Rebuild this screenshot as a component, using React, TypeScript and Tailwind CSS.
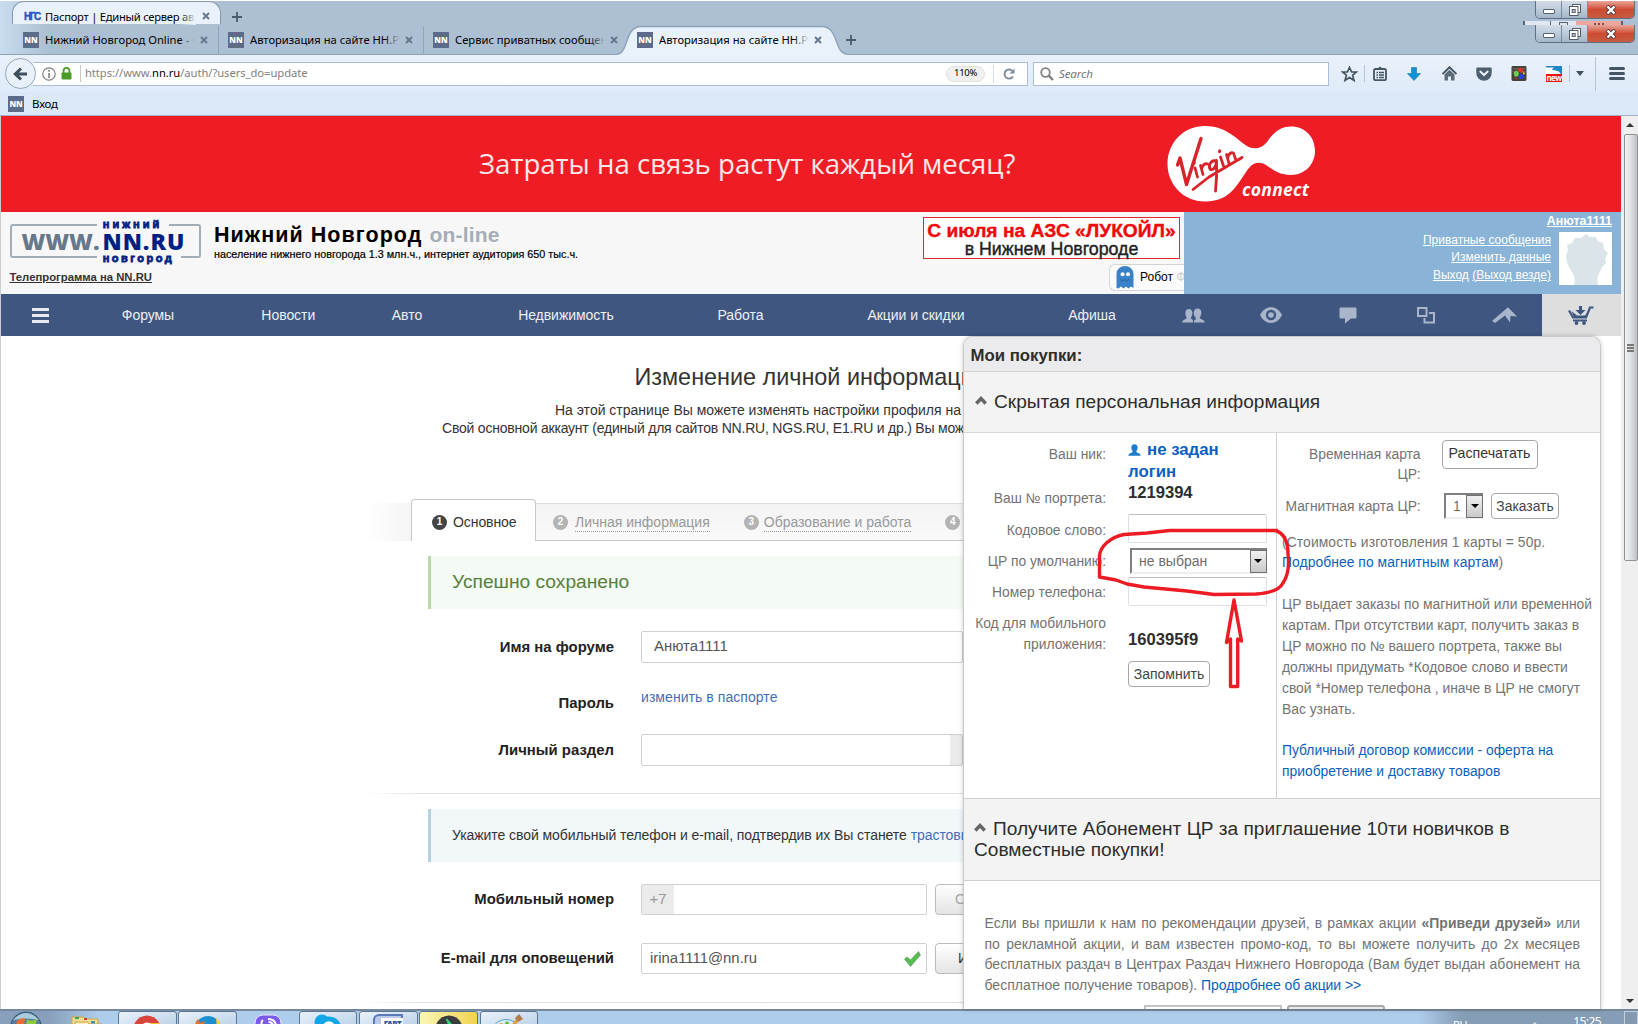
import type { ReactNode } from "react";

function NNIcon() {
  return (
    <span className="flex h-4 w-4 shrink-0 items-center justify-center overflow-hidden bg-[#5b6b89] font-['Open_Sans',sans-serif] text-[8px] leading-none font-extrabold text-white">
      NN
    </span>
  );
}

function Cross() {
  return (
    <svg className="h-2 w-2 shrink-0" viewBox="0 0 8 8">
      <path d="M1 1L7 7M7 1L1 7" stroke="#66788d" strokeWidth="2" />
    </svg>
  );
}

function Plus() {
  return (
    <svg className="h-2.5 w-2.5 shrink-0" viewBox="0 0 10 10">
      <path d="M5 0V10M0 5H10" stroke="#4b5b6c" strokeWidth="1.8" />
    </svg>
  );
}

function Tab({ title, fade }: { title: string; fade: string }) {
  return (
    <>
      <NNIcon />
      <span className="relative ml-[6px] w-[150px] overflow-hidden whitespace-nowrap">
        {title}
        <span className={"absolute inset-y-0 right-0 w-4 bg-linear-to-r from-transparent " + fade} />
      </span>
    </>
  );
}

function WindowButtons() {
  return (
    <div className="flex h-[18px] w-[100px] overflow-hidden rounded-b-[5px] border border-t-0 border-[#5f6e80]">
      <div className="flex w-[26px] items-center justify-center border-r border-[#7a899b] bg-linear-to-b from-[#d3dce6] via-[#bccbdb] to-[#a3b5c8] pt-1">
        <span className="h-[5px] w-[12px] rounded-[1px] border border-[#59646f] bg-white" />
      </div>
      <div className="flex w-[26px] items-center justify-center border-r border-[#7a899b] bg-linear-to-b from-[#d3dce6] via-[#bccbdb] to-[#a3b5c8]">
        <svg className="h-[12px] w-[12px]" viewBox="0 0 12 12">
          <rect x="3.5" y="0.5" width="8" height="8" fill="#fff" stroke="#545f6b" />
          <rect x="0.5" y="2.5" width="8.5" height="9" fill="#fff" stroke="#545f6b" />
          <rect x="3.2" y="5.5" width="3" height="3" fill="#b5c4d3" stroke="#545f6b" />
        </svg>
      </div>
      <div className="flex flex-1 items-center justify-center bg-linear-to-b from-[#e6a598] via-[#cf4a33] to-[#c55b43]">
        <svg className="h-[10px] w-[12px]" viewBox="0 0 12 10">
          <path d="M2 1L10 9M10 1L2 9" stroke="#5b3a3c" strokeWidth="4.2" />
          <path d="M2.5 1.5L9.5 8.5M9.5 1.5L2.5 8.5" stroke="#fff" strokeWidth="2.4" />
        </svg>
      </div>
    </div>
  );
}

function TitleBars() {
  return (
    <div className="flex justify-between border-t border-white bg-linear-to-r from-[#c9dcf0] via-[#adbfd2] via-3% to-[#adbfd2] text-[11.2px] text-black">
      <div className="flex flex-col">
        <div className="flex h-[24px]">
          <div className="relative ml-[12px] flex h-[23px] w-[209px] items-center rounded-t-[12px] border border-b-0 border-[#8498ae] bg-[#e9f1fb] pt-[7px] pl-[11px]">
            <span className="w-[21px] font-['Liberation_Sans',sans-serif] text-[10px] leading-none font-bold tracking-[-1.4px] text-[#2b55c4] [-webkit-text-stroke:0.4px_#2b55c4]">НГС</span>
            <span className="relative h-[17px] w-[151px] overflow-hidden leading-[17px] tracking-[-0.25px] whitespace-nowrap">
              Паспорт | Единый сервер ав
              <span className="absolute inset-y-0 right-0 w-4 bg-linear-to-r from-transparent to-[#e9f1fb]" />
            </span>
            <span className="ml-[6px] flex pb-[2px]"><Cross /></span>
          </div>
          <div className="mt-[11px] ml-[11px]"><Plus /></div>
        </div>
        <div className="flex h-[29px] pt-px">
          <div className="flex w-[219px] items-center border-r border-[#92a5ba] pl-[23px]">
            <Tab title="Нижний Новгород Online - Ф" fade="to-[#adbfd2]" />
            <span className="ml-[5px] flex"><Cross /></span>
          </div>
          <div className="flex w-[205px] items-center border-r border-[#92a5ba] pl-[9px]">
            <Tab title="Авторизация на сайте НН.РУ" fade="to-[#adbfd2]" />
            <span className="ml-[5px] flex"><Cross /></span>
          </div>
          <div className="flex w-[201px] items-center pl-[9px]">
            <Tab title="Сервис приватных сообщений" fade="to-[#adbfd2]" />
            <span className="ml-[5px] flex"><Cross /></span>
          </div>
          <div className="relative flex w-[217px] items-center pl-[12px]">
            <svg className="absolute -top-px -left-[8px] h-[30px] w-[234px]" viewBox="0 0 234 30">
              <path d="M0 29.5C12 29.5 7 1.500 24 1.500H205C222 1.500 217 29.500 230 29.500V30H0Z" fill="#e9f1fb" />
              <path d="M0 29C12 29 7 1.500 24 1.500H205C222 1.500 217 29 230 29" fill="none" stroke="#8da1b7" strokeWidth="1.4" />
            </svg>
            <div className="relative flex items-center">
              <Tab title="Авторизация на сайте НН.РУ" fade="to-[#e9f1fb]" />
              <span className="ml-[5px] flex"><Cross /></span>
            </div>
          </div>
          <div className="flex items-center pl-[4px]"><Plus /></div>
        </div>
      </div>
      <div className="flex flex-col items-end pr-[3px]">
        <WindowButtons />
        <div className="mt-[2px] mr-[12px] flex h-[4px] w-[100px] border-l-2 border-[#59646f]">
          <div className="w-[25px] bg-[#dfe8f2]" />
          <div className="flex w-[26px] justify-center border-l border-[#59646f] bg-[#dfe8f2]"><span className="mt-[1px] h-[3px] w-[9px] border border-b-0 border-[#59646f]" /></div>
          <div className="flex flex-1 justify-center border-r-2 border-[#59646f] bg-[#eda79d]"><span className="mt-[2px] w-[10px] border-t-2 border-dotted border-[#7c4f50]" /></div>
        </div>
        <WindowButtons />
      </div>
    </div>
  );
}

function ToolbarIcon({ w, children }: { w: string; children: ReactNode }) {
  return <div className={"flex shrink-0 items-center justify-center " + w}>{children}</div>;
}

function Toolbar() {
  return (
    <div className="flex h-[38px] items-center border-t border-[#8da1b7] bg-linear-to-b from-[#e9f1fb] to-[#dfebf8]">
      <div className="z-10 ml-[5px] flex h-[31px] w-[31px] shrink-0 items-center justify-center rounded-full border-[1.5px] border-[#93a8c0] bg-[#e9f1fa]">
        <svg className="h-[14px] w-[15px]" viewBox="0 0 15 14">
          <path d="M14 7H3M8 1.5L2.3 7L8 12.5" fill="none" stroke="#3f4f5e" strokeWidth="3" />
        </svg>
      </div>
      <div className="-ml-[3px] flex h-[24px] w-[995px] items-center border border-l-0 border-[#aabdd3] bg-white text-[11.2px]">
        <svg className="ml-[9px] h-[14px] w-[14px] shrink-0" viewBox="0 0 14 14">
          <circle cx="7" cy="7" r="6.2" fill="none" stroke="#808080" strokeWidth="1.2" />
          <path d="M7 3V4.7M7 6V11" stroke="#808080" strokeWidth="1.6" />
        </svg>
        <svg className="ml-[4.500px] h-[13px] w-[11px] shrink-0" viewBox="0 0 11 13">
          <path d="M2.6 6V3.8a2.9 2.9 0 0 1 5.8 0V6" fill="none" stroke="#4a9c28" strokeWidth="1.8" />
          <rect x="0.5" y="5.5" width="10" height="7" rx="0.8" fill="#4a9c28" />
        </svg>
        <span className="ml-[8px] h-[17px] w-px bg-[#c9c9c9]" />
        <span className="ml-[4.500px] tracking-[-0.04px] text-[#808080]">
          https://www.<span className="text-black">nn.ru</span>/auth/?users_do=update
        </span>
        <span className="ml-auto flex h-[16px] w-[39px] items-center justify-center rounded-full border border-[#e0e0e0] bg-[#f0f0f0] text-[9.500px] tracking-[-0.3px] text-black">110%</span>
        <span className="ml-[8px] h-[18px] w-px bg-[#d5dde6]" />
        <svg className="mr-[12px] ml-[9px] h-[12px] w-[12px]" viewBox="0 0 12 12">
          <path d="M10 8.5A4.6 4.6 0 1 1 9.4 2.8" fill="none" stroke="#7d8b9b" strokeWidth="1.9" />
          <path d="M11.5 0.5V5.5H6.5Z" fill="#7d8b9b" />
        </svg>
      </div>
      <div className="ml-[5px] flex h-[24px] w-[296px] items-center border border-[#aabdd3] bg-white text-[11.500px]">
        <svg className="ml-[6px] h-[14px] w-[14px]" viewBox="0 0 14 14">
          <circle cx="5.5" cy="5.5" r="4.3" fill="none" stroke="#808080" strokeWidth="1.8" />
          <path d="M8.7 8.7L13 13" stroke="#808080" strokeWidth="2.4" />
        </svg>
        <span className="ml-[5px] tracking-[-0.1px] text-[#757575] italic">Search</span>
      </div>
      <ToolbarIcon w="ml-[2px] w-[34px]">
        <svg className="ml-0.5 h-[16px] w-[17px]" viewBox="0 0 17 16">
          <path d="M8.5 1.5L10.6 6H15.3L11.6 9.2L13 14.4L8.5 11.5L4 14.4L5.4 9.2L1.7 6H6.4Z" fill="none" stroke="#445463" strokeWidth="1.7" />
        </svg>
      </ToolbarIcon>
      <span className="-ml-px h-[17px] w-px bg-[#b4c4d6]" />
      <ToolbarIcon w="w-[29px]">
        <svg className="h-[15px] w-[14px]" viewBox="0 0 14 15">
          <rect x="1" y="3" width="12" height="11.2" rx="1.5" fill="none" stroke="#445463" strokeWidth="1.8" />
          <path d="M4.5 2.5L7 0.5L9.5 2.5V4H4.5Z" fill="#445463" />
          <path d="M3.5 6.5H5M6 6.5H11M3.5 9H5M6 9H11M3.5 11.5H5M6 11.5H11" stroke="#445463" strokeWidth="1.3" />
        </svg>
      </ToolbarIcon>
      <ToolbarIcon w="ml-[5px] w-[30px]">
        <svg className="h-[14px] w-[14px]" viewBox="0 0 14 14">
          <path d="M4.5 0.5H9.5V6.5H13.6L7 13.5L0.4 6.5H4.5Z" fill="#1292d6" stroke="#0e78b4" strokeWidth="0.6" />
        </svg>
      </ToolbarIcon>
      <ToolbarIcon w="ml-[5px] w-[30px]">
        <svg className="h-[15px] w-[15px]" viewBox="0 0 15 15">
          <path d="M0.5 8L7.5 1.2L14.5 8" fill="none" stroke="#445463" strokeWidth="1.9" />
          <path d="M2.5 8.6L7.5 3.8L12.5 8.6V14.5H9V10.5H6V14.5H2.5Z" fill="#5d6b79" />
        </svg>
      </ToolbarIcon>
      <ToolbarIcon w="ml-[5px] w-[30px]">
        <svg className="h-[14px] w-[16px]" viewBox="0 0 16 14">
          <path d="M1.5 0.5H14.5Q15.7 0.5 15.7 1.8V6A7.7 7.7 0 0 1 0.3 6V1.8Q0.3 0.5 1.5 0.5Z" fill="#4f5e6c" />
          <path d="M4.3 4.6L8 8.1L11.7 4.6" fill="none" stroke="#e8f0fa" strokeWidth="2" strokeLinecap="round" />
        </svg>
      </ToolbarIcon>
      <ToolbarIcon w="ml-[5px] w-[30px]">
        <svg className="h-[15px] w-[16px]" viewBox="0 0 16 16">
          <rect width="16" height="16" rx="1.5" fill="#45413b" />
          <path d="M1 3H15M1 6H15" stroke="#777168" />
          <path d="M9.500 1.500L13 4L11.500 7.500L8 6.500L6.500 3.500Z" fill="#e33229" />
          <path d="M5 4.500L8 7.500L7 11L3.500 11.500L2 7.500Z" fill="#6ad04c" />
          <path d="M9.500 8L13.500 10L12.500 13.500L8.500 14L7.500 11Z" fill="#2a3fe0" />
          <path d="M12 6.500L14.500 7.500L13 9.500Z" fill="#ece04a" />
          <path d="M4 12L6.500 13.500L4.500 14.500Z" fill="#c33" />
        </svg>
      </ToolbarIcon>
      <ToolbarIcon w="ml-[5px] w-[30px]">
        <div className="relative h-[16px] w-[16px] overflow-hidden bg-[#1e87c1]">
          <svg className="absolute inset-0 h-[9px] w-[16px]" viewBox="0 0 16 9">
            <path d="M0 1.500H8L5.500 3.500L13 5.500L15.500 9H0Z" fill="#fff" />
          </svg>
          <span className="absolute inset-x-0 bottom-0 h-[8px] bg-[#f50d0d] text-center text-[8px] leading-[7px] font-bold tracking-[-0.5px] text-white">new</span>
        </div>
      </ToolbarIcon>
      <span className="h-[17px] w-px bg-[#b4c4d6]" />
      <span className="ml-[6px] border-x-4 border-t-5 border-x-transparent border-t-[#3f4f5e]" />
      <span className="ml-[11px] h-[34px] w-px bg-[#b4c4d6]" />
      <span className="ml-[13px] flex w-[16px] flex-col gap-[2px]">
        <span className="h-[3px] rounded-full bg-[#445463]" />
        <span className="h-[3px] rounded-full bg-[#445463]" />
        <span className="h-[3px] rounded-full bg-[#445463]" />
      </span>
    </div>
  );
}

function BannerAd() {
  return (
    <div className="relative flex h-[95.500px] items-center bg-[#ee1c24]">
      <span className="ml-[478px] w-[540px] font-['Open_Sans',sans-serif] text-[27.600px] leading-none whitespace-nowrap text-white/90">
        Затраты на связь растут каждый месяц?
      </span>
      <div className="relative ml-[148px] h-[76px] w-[149px]">
        <svg className="h-[76px] w-[149px]" viewBox="0 0 149 76">
          <path d="M38 0C57 0 68 11 77 18C84 24 94 24 100 16C106 7 113 0.500 124 0.500C138 0.500 148 11 148 25C148 38 138 49 124 49C112 49 105 43 99 39C93 35.500 87 36 82 42C72 54 66 75.500 38 75.500C16 75.500 0.500 58 0.500 38C0.500 17 16 0 38 0Z" fill="#fff" />
          <g fill="none" stroke="#d9232b" strokeLinecap="round" strokeLinejoin="round">
            <path d="M10.500 39L13 32L19.500 58.500L34 12.500" strokeWidth="3.400" />
            <path d="M28 42L30.500 51M33.500 39.500L36 48.500M34.500 43C35.500 39 38 37 40.500 38M49 35C44 33.500 40.500 40 43.500 43.500C47 45 49.500 39 49.500 34.500C50 44 49.500 56 48.500 65M26 63.500L42 51L75 31.500M53.500 31L56.500 40M59.500 28.500L62 37.500M60.500 32C62 26.500 66 25 67 28.500L69 34.500Q73 33.500 75 31.500" strokeWidth="2.800" />
            <path d="M27 37L27.200 36.500M52.500 25.500L52.700 25" strokeWidth="3.200" />
          </g>
        </svg>
        <span className="absolute top-[53.500px] left-[75px] font-['Open_Sans',sans-serif] text-[17.500px] leading-[20px] font-bold tracking-[0.300px] text-white italic">connect</span>
      </div>
    </div>
  );
}

function Header() {
  return (
    <div className="flex h-[82.500px] bg-[#f7f7f7] font-['Liberation_Sans',sans-serif]">
      <div className="ml-[8.500px] flex w-[204.500px] flex-col">
        <div className="mt-[8px] flex h-[43px] w-[191px] flex-col">
          <div className="flex h-[9px] items-end">
            <span className="h-[5px] w-[87px] rounded-tl-[3px] border-t-2 border-l-2 border-[#a3adb5]" />
            <span className="w-[72px] text-center text-[11px] leading-[9px] font-black tracking-[3px] text-[#001f85] [-webkit-text-stroke:0.8px_#001f85]">нижний</span>
            <span className="h-[5px] flex-1 rounded-tr-[3px] border-t-2 border-r-2 border-[#a3adb5]" />
          </div>
          <div className="flex h-[25px] items-center border-x-2 border-[#a3adb5] pl-[10px] font-['Open_Sans',sans-serif] text-[23px] leading-[24px] font-extrabold text-[#67788a]">
            <span className="tracking-[-0.1px]">WWW.</span>
            <span className="ml-[3px] tracking-[1px] text-[#001f85]">NN.RU</span>
          </div>
          <div className="flex h-[9px] items-start">
            <span className="h-[4px] w-[87px] rounded-bl-[3px] border-b-2 border-l-2 border-[#a3adb5]" />
            <span className="w-[84px] text-center text-[11px] leading-[8px] font-black tracking-[2.500px] text-[#001f85] [-webkit-text-stroke:0.8px_#001f85]">новгород</span>
            <span className="h-[4px] flex-1 rounded-br-[3px] border-r-2 border-b-2 border-[#a3adb5]" />
          </div>
        </div>
        <span className="mt-[6px] text-[11.300px] leading-[17px] font-bold whitespace-nowrap text-[#333] underline">Телепрограмма на NN.RU</span>
      </div>
      <div className="flex w-[710px] flex-col pt-[11px] font-bold">
        <span className="text-[21.500px] leading-[23px] tracking-[1.050px] whitespace-nowrap text-black">
          Нижний Новгород <span className="text-[21px] tracking-[0.2px] text-[#a4adb8]">on-line</span>
        </span>
        <span className="text-[10.800px] leading-[14px] font-normal text-black [-webkit-text-stroke:0.2px_black]">
          население нижнего новгорода 1.3 млн.ч., интернет аудитория 650 тыс.ч.
        </span>
      </div>
      <div className="flex w-[260px] flex-col items-end">
        <div className="mt-[5px] mr-[4px] flex h-[42px] w-[257px] flex-col items-center border-[1.5px] border-[#e8272d] bg-white whitespace-nowrap">
          <span className="mt-[3px] text-[19.200px] leading-[20px] font-bold text-[#ee0a0a] [-webkit-text-stroke:0.4px_#ee0a0a]">С июля на АЗС «ЛУКОЙЛ»</span>
          <span className="-mt-px text-[17.800px] leading-[18px] text-[#222] [-webkit-text-stroke:0.4px_#222]">в Нижнем Новгороде</span>
        </div>
        <div className="mt-[5px] flex h-[27px] w-[75px] items-center overflow-hidden rounded-l-[6px] border border-r-0 border-[#d4d4d4] bg-[#fbfbfb] pl-[6px]">
          <svg className="h-[23px] w-[18px] shrink-0" viewBox="0 0 18 23">
            <path d="M0.500 22V8A8.500 8 0 0 1 17.500 8V22L15 20.500L12.500 22.500L10 20.500L7.500 22.500L5 20.500L2.500 22.500Z" fill="#3a82c8" />
            <circle cx="6.500" cy="8.300" r="2" fill="#fff" />
            <circle cx="12" cy="8.300" r="2" fill="#fff" />
            <path d="M4.500 13.500L6.500 15L8.500 13.500L10.500 15L12.500 13.500L14 14.500" fill="none" stroke="#245d99" />
          </svg>
          <span className="ml-[6px] text-[12px] whitespace-nowrap text-black">Робот <span className="text-[#ccc]">Ф</span></span>
        </div>
      </div>
      <div className="flex flex-1 flex-col items-end bg-[#8ab4d7] pr-[8.500px] text-[12.400px] whitespace-nowrap text-white">
        <span className="mt-[1.500px] leading-[17px] font-bold underline">Анюта1111</span>
        <div className="mt-[2px] flex gap-[8px]">
          <div className="flex flex-col items-end text-[12px] leading-[17.3px]">
            <span className="underline">Приватные сообщения</span>
            <span className="underline">Изменить данные</span>
            <span><span className="underline">Выход</span> <span className="underline">(Выход везде)</span></span>
          </div>
          <div className="h-[53px] w-[53px] bg-white">
            <svg className="h-[53px] w-[53px]" viewBox="0 0 53 53">
              <path d="M15 53C17 45 14 42 11 37L8 30L7 24L9 18L8 13L13 11L16 6L22 6L27 2L31 5L37 5L39 9L44 11L45 17L49 21L46 27L47 31L43 35L41 40C38 44 38 48 39 53Z" fill="#dbe5e9" />
            </svg>
          </div>
        </div>
      </div>
    </div>
  );
}

function NavItem({ w, children }: { w: string; children: ReactNode }) {
  return <div className={"flex shrink-0 items-center justify-center whitespace-nowrap " + w}>{children}</div>;
}

function Nav() {
  return (
    <div className="flex h-[42px] bg-[#3f5680] font-['Liberation_Sans',sans-serif] text-[14px] tracking-[-0.05px] text-[#eceff4]">
      <NavItem w="w-[78px]">
        <span className="flex w-[17px] flex-col gap-[3px]">
          <span className="h-[3px] bg-[#e6eaf0]" />
          <span className="h-[3px] bg-[#e6eaf0]" />
          <span className="h-[3px] bg-[#e6eaf0]" />
        </span>
      </NavItem>
      <NavItem w="w-[138px]">Форумы</NavItem>
      <NavItem w="w-[142.6px]">Новости</NavItem>
      <NavItem w="w-[94.800px]">Авто</NavItem>
      <NavItem w="w-[223.200px]">Недвижимость</NavItem>
      <NavItem w="w-[125.800px]">Работа</NavItem>
      <NavItem w="w-[225.200px]">Акции и скидки</NavItem>
      <NavItem w="w-[126.800px]">Афиша</NavItem>
      <NavItem w="w-[75.600px]">
        <svg className="h-[15px] w-[23px]" viewBox="0 0 23 15" fill="#a9b5cb">
          <path d="M12 14.500V12.500C14 12 14 11 13.500 9.500C10.500 6 11.500 0.800 15.500 0.500C20 0.500 20.500 6 17.800 9.500C17.500 11.500 22.500 11 22.800 14.500Z" />
          <path d="M0.200 14.500C0.500 11 5 11.500 4.700 9.500C2.500 6 3 1 7 1C11 1 11.200 6.500 9 9.500C8.700 11.500 11 11 11 12.500V14.500Z" />
        </svg>
      </NavItem>
      <NavItem w="w-[80px]">
        <svg className="h-[16px] w-[22px]" viewBox="0 0 22 16">
          <path d="M0 8C5 -2.500 17 -2.500 22 8C17 18.500 5 18.500 0 8Z" fill="#a9b5cb" />
          <circle cx="11" cy="8" r="5.200" fill="#3f5680" />
          <circle cx="11" cy="8" r="2.800" fill="#a9b5cb" />
        </svg>
      </NavItem>
      <NavItem w="w-[74px]">
        <svg className="h-[17px] w-[18px]" viewBox="0 0 18 17">
          <path d="M1.500 0.500H16.500Q17.500 0.500 17.500 1.500V10.500Q17.500 11.500 16.500 11.500H12L6 16.500V11.500H1.500Q0.500 11.500 0.500 10.500V1.500Q0.500 0.500 1.500 0.500Z" fill="#a9b5cb" />
        </svg>
      </NavItem>
      <NavItem w="w-[82px]">
        <svg className="h-[17px] w-[18px]" viewBox="0 0 18 17">
          <rect x="1" y="1" width="8.500" height="8" fill="none" stroke="#a9b5cb" strokeWidth="2" />
          <path d="M12 6H17V15.500H7.500V11" fill="none" stroke="#a9b5cb" strokeWidth="2" />
        </svg>
      </NavItem>
      <NavItem w="w-[75px]">
        <svg className="h-[17px] w-[25px]" viewBox="0 0 25 17">
          <path d="M0 14L16 0.300L25 9.500L18.500 9L18 15.500L13 8.500L3 16Z" fill="#a9b5cb" />
        </svg>
      </NavItem>
      <div className="flex flex-1 items-center justify-center bg-[#dedede]">
        <svg className="h-[19px] w-[26px]" viewBox="0 0 26 19">
          <path d="M1 4.500L5 11.500H18L22 1.500H25.500" fill="none" stroke="#3f5680" strokeWidth="2.200" />
          <path d="M3.500 5L9 9.500L17 9.500L20.500 5L18 11.500H6ZM5 13.500H19V15.500H5Z" fill="#3f5680" />
          <path d="M11 0H14V4H17.500L12.500 9L7.500 4H11Z" fill="#3f5680" />
          <circle cx="8.500" cy="17" r="1.900" fill="#3f5680" />
          <circle cx="16" cy="17" r="1.900" fill="#3f5680" />
        </svg>
      </div>
    </div>
  );
}

function Badge({ n, color }: { n: string; color: string }) {
  return (
    <span className={"flex h-[15px] w-[15px] shrink-0 items-center justify-center rounded-full text-[10px] leading-none font-bold text-white " + color}>{n}</span>
  );
}

function Label({ children }: { children: ReactNode }) {
  return <span className="w-[250px] shrink-0 text-right text-[14.900px] font-bold whitespace-nowrap text-[#222]">{children}</span>;
}

function ProfileForm() {
  return (
    <div className="flex w-[962px] flex-col overflow-hidden pl-[363px] text-[14px] whitespace-nowrap text-[#333]">
      <h1 className="mt-[27px] pl-[270.500px] text-[23.400px] leading-[28px]">Изменение личной информации</h1>
      <p className="mt-[10px] pl-[191px] leading-[18px]">На этой странице Вы можете изменять настройки профиля на</p>
      <p className="pl-[78px] leading-[18px] tracking-[-0.21px]">Свой основной аккаунт (единый для сайтов NN.RU, NGS.RU, E1.RU и др.) Вы может</p>
      <div className="mt-[62px] flex h-[42px] items-end">
        <div className="h-[38px] w-[47px] shrink-0 bg-linear-to-r from-white to-[#f5f5f5]" />
        <div className="relative flex h-[42px] w-[125px] shrink-0 items-center rounded-t-[4px] border border-b-0 border-[#c8c8c8] bg-white pt-[3px] pl-[20px]">
          <Badge n="1" color="bg-[#444]" />
          <span className="ml-[6px] tracking-[-0.08px] text-[#333]">Основное</span>
        </div>
        <div className="flex h-[38px] w-[600px] shrink-0 items-center border-y border-t-[#dedede] border-b-[#c8c8c8] bg-linear-to-b from-[#f3f3f3] to-[#fafafa] text-[#999]">
          <span className="ml-[17px] flex"><Badge n="2" color="bg-[#b3b3b3]" /></span>
          <span className="mt-[2px] ml-[7px] border-b border-dotted border-[#999] leading-[17px]">Личная информация</span>
          <span className="ml-[34px] flex"><Badge n="3" color="bg-[#b3b3b3]" /></span>
          <span className="mt-[2px] ml-[5px] border-b border-dotted border-[#999] leading-[17px]">Образование и работа</span>
          <span className="ml-[34px] flex"><Badge n="4" color="bg-[#b3b3b3]" /></span>
        </div>
      </div>
      <div className="mt-[15px] ml-[64px] flex h-[53px] w-[620px] items-center border-l-3 border-[#bcd9ae] bg-[#f4faf4] pb-[1px] pl-[21px] text-[19.200px] text-[#567f3c]">Успешно сохранено</div>
      <div className="mt-[22px] flex h-[32px] items-center">
        <Label>Имя на форуме</Label>
        <div className="ml-[27px] flex h-[32px] w-[400px] items-center rounded-[2px] border border-[#d0d0d0] pb-px pl-[12px] text-[14.900px] text-[#555]">Анюта1111</div>
      </div>
      <div className="mt-[30px] flex h-[20px] items-center">
        <Label>Пароль</Label>
        <span className="-mt-[11px] ml-[27px] tracking-[0.060px] text-[#3f6fb8]">изменить в паспорте</span>
      </div>
      <div className="mt-[21px] flex h-[32px] items-center">
        <Label>Личный раздел</Label>
        <div className="ml-[27px] flex h-[32px] w-[400px] rounded-[2px] border border-[#d0d0d0]">
          <div className="ml-[308px] flex-1 bg-[#ebebeb]" />
        </div>
      </div>
      <div className="mt-[27px] h-px shrink-0 bg-linear-to-r from-white to-[#e0e0e0] to-10%" />
      <div className="mt-[15px] ml-[64px] flex h-[53px] w-[620px] items-center border-l-3 border-[#b5d0de] bg-[#f2f7fa] pl-[21px] tracking-[-0.07px]">
        Укажите свой мобильный телефон и e-mail, подтвердив их Вы станете<span className="ml-1 text-[#3f6fb8]">трастовым</span>
      </div>
      <div className="mt-[22px] flex h-[31px] items-center">
        <Label>Мобильный номер</Label>
        <div className="ml-[27px] flex h-[31px] w-[286px] shrink-0 rounded-[2px] border border-[#d0d0d0]">
          <div className="flex w-[32px] items-center justify-center bg-[#ebebeb] text-[14.900px] text-[#999]">+7</div>
        </div>
        <div className="ml-[8px] flex h-[31px] w-[120px] shrink-0 items-center rounded-[4px] border border-[#bbb] bg-linear-to-b from-white to-[#e4e4e4] pl-[19px] text-[#a5a5a5]">Отправить</div>
      </div>
      <div className="mt-[28px] flex h-[31px] items-center">
        <Label>E-mail для оповещений</Label>
        <div className="ml-[27px] flex h-[31px] w-[286px] shrink-0 items-center rounded-[2px] border border-[#d0d0d0] pl-[8px] text-[14.900px] text-[#555]">
          irina1111@nn.ru
          <svg className="mr-[5px] ml-auto h-[16px] w-[17px]" viewBox="0 0 17 16">
            <path d="M0.500 8L3 6L6.500 9L14.500 0.500L16.500 4L6.500 15.500Z" fill="#58bb52" stroke="#3f9f43" strokeWidth="0.600" />
          </svg>
        </div>
        <div className="ml-[8px] flex h-[31px] w-[120px] shrink-0 items-center rounded-[4px] border border-[#bbb] bg-linear-to-b from-white to-[#e4e4e4] pl-[22px] text-[#333]">Изменить</div>
      </div>
      <div className="mt-[28px] h-px shrink-0 bg-linear-to-r from-white to-[#e0e0e0] to-10%" />
    </div>
  );
}

function Chevron() {
  return (
    <svg className="mr-[7px] inline-block h-[9px] w-[12px] -translate-y-[2px]" viewBox="0 0 12 9">
      <path d="M1.300 7.500L6 2.500L10.700 7.500" fill="none" stroke="#666" strokeWidth="3.400" />
    </svg>
  );
}

function Select({ value, size }: { value: string; size: string }) {
  return (
    <div className={"flex items-center border-2 border-r-0 border-[#7f7f7f] border-b-[#eee] bg-white text-[#6d6d6d] " + size}>
      <span>{value}</span>
      <span className="ml-auto flex h-[23px] w-[17px] shrink-0 items-center justify-center border border-[#707070] bg-linear-to-b from-[#f0f0f0] to-[#c9c9c9]">
        <span className="border-x-4 border-t-4 border-x-transparent border-t-black" />
      </span>
    </div>
  );
}

function PurchasesPanel() {
  return (
    <div className="absolute top-[336px] left-[962.500px] h-[673px] w-[638.500px] overflow-hidden rounded-t-[10px] border border-b-0 border-[#c9c9c9] bg-white font-['Liberation_Sans',sans-serif] text-[13.850px] whitespace-nowrap text-[#737373] shadow-[0_0_5px_rgba(0,0,0,0.2)]">
      <div className="flex h-[35px] items-center border-b border-[#d0d0d2] bg-[#ebebed] pt-[3px] pl-[7px] text-[16.800px] font-bold text-[#2d2d2d]">Мои покупки:</div>
      <div className="flex h-[61px] items-center border-b border-[#d8d8d8] bg-[#f3f3f3] pl-[11.500px] text-[19.100px] text-[#2d2d2d]">
        <Chevron />Скрытая персональная информация
      </div>
      <div className="flex h-[365px]">
        <div className="flex w-[313px] border-r border-[#cfcfcf]">
          <div className="flex w-[142.500px] flex-col items-end pt-[10.500px] leading-[20px]">
            <span>Ваш ник:</span>
            <span className="mt-[24px]">Ваш № портрета:</span>
            <span className="mt-[12px]">Кодовое слово:</span>
            <span className="mt-[11px]">ЦР по умолчанию:</span>
            <span className="mt-[11.500px]">Номер телефона:</span>
            <span className="mt-[11px]">Код для мобильного</span>
            <span className="mt-[0.500px]">приложения:</span>
          </div>
          <div className="ml-[22px] flex flex-col text-[16.600px] font-bold text-[#2d2d2d]">
            <span className="mt-[5px] flex items-center leading-[23px] text-[#0b5fc0]">
              <svg className="mr-[6px] h-[12px] w-[13px]" viewBox="0 0 13 12">
                <path d="M0.300 11.800C0.500 8.500 5 9 4.700 7.500C2.500 4.500 3 0.300 6.500 0.300S10.500 4.500 8.300 7.500C8 9 12.500 8.500 12.700 11.800Z" fill="#1d7cc9" />
              </svg>
              <span className="text-[16.800px]">не задан</span>
            </span>
            <span className="text-[16.800px] leading-[22px] text-[#0b5fc0]">логин</span>
            <span className="leading-[20px]">1219394</span>
            <div className="mt-[11px] h-[28.500px] w-[138.500px] rounded-[2px] border border-[#dcdfe6] border-t-[#bfbfbf]" />
            <div className="mt-[5.500px] ml-[2px] text-[14px] font-normal">
              <Select value="не выбран" size="h-[26px] w-[136.500px] pl-[7px]" />
            </div>
            <div className="mt-[3px] h-[28.500px] w-[138.500px] rounded-[2px] border border-[#dcdfe6] border-t-[#bfbfbf]" />
            <span className="mt-[24.500px] leading-[20px]">160395f9</span>
            <span className="mt-[11px] flex h-[26px] w-[82px] items-center justify-center rounded-[4px] border border-[#a6a6a6] text-[14px] font-normal text-[#444]">Запомнить</span>
          </div>
        </div>
        <div className="flex flex-col pl-[5.500px]">
          <div className="flex h-[60px]">
            <div className="w-[138.500px] pt-[10.500px] text-right leading-[20.500px]">Временная карта<br />ЦР:</div>
            <span className="mt-[7px] ml-[21px] flex h-[29px] w-[96px] items-center justify-center rounded-[4px] border border-[#a6a6a6] pb-px text-[14.200px] text-[#333]">Распечатать</span>
          </div>
          <div className="flex h-[26px] items-center">
            <span className="w-[138.500px] text-right">Магнитная карта ЦР:</span>
            <span className="ml-[23.500px]"><Select value="1" size="h-[26px] w-[39px] pl-[7px]" /></span>
            <span className="ml-[8px] flex h-[26px] w-[68px] items-center justify-center rounded-[4px] border border-[#a6a6a6] text-[#444]">Заказать</span>
          </div>
          <div className="mt-[12.500px] leading-[20.870px]">
            <span className="tracking-[0.100px]">(Стоимость изготовления 1 карты = 50р.</span><br />
            <span className="tracking-[0.070px] text-[#0b5fc0]">Подробнее по магнитным картам</span>)<br /><br />
            ЦР выдает заказы по магнитной или временной<br />
            картам. При отсутствии карт, получить заказ в<br />
            ЦР можно по № вашего портрета, также вы<br />
            должны придумать *Кодовое слово и ввести<br />
            свой *Номер телефона , иначе в ЦР не смогут<br />
            Вас узнать.<br /><br />
            <span className="text-[#0b5fc0]">Публичный договор комиссии - оферта на<br />приобретение и доставку товаров</span>
          </div>
        </div>
      </div>
      <div className="h-[83px] border-y border-[#cfcfcf] bg-[#f3f3f3] pt-[20px] pl-[10.500px] text-[19.120px] leading-[20.500px] text-[#2d2d2d]">
        <Chevron />Получите Абонемент ЦР за приглашение 10ти новичков в<br />Совместные покупки!
      </div>
      <div className="mt-[32px] ml-[21px] w-[595.500px] text-[14px] leading-[20.700px]">
        <div className="[text-align-last:justify]">Если вы пришли к нам по рекомендации друзей, в рамках акции <b>«Приведи друзей»</b> или</div>
        <div className="[text-align-last:justify]">по рекламной акции, и вам известен промо-код, то вы можете получить до 2х месяцев</div>
        <div className="[text-align-last:justify]">бесплатных раздач в Центрах Раздач Нижнего Новгорода (Вам будет выдан абонемент на</div>
        <div>бесплатное получение товаров). <span className="tracking-[-0.080px] text-[#0b5fc0]">Продробнее об акции &gt;&gt;</span></div>
      </div>
      <div className="mt-[9px] ml-[180px] flex gap-[5px]">
        <div className="h-[20px] w-[138px] border-2 border-[#c4c4c4]" />
        <div className="h-[20px] w-[98px] rounded-t-[3px] border-2 border-[#a8a8a8] bg-[#e8e8e8]" />
      </div>
    </div>
  );
}

function Annotation() {
  return (
    <svg className="pointer-events-none absolute top-[510px] left-[1090px] h-[190px] w-[210px]" viewBox="0 0 210 190">
      <g fill="none" stroke="#ed1c24" strokeWidth="3.400" strokeLinejoin="round">
        <path d="M188 20.500H80L57 23L34 24.500C20 27 10 37 9.500 46V67L26 70L37 74L54 77L97 81L124 84.500L166 84C182 83 190 79 193 73C199 64 199 52 198 44C198 32 194 23 185 20.500" />
        <path d="M144 90L151.500 131L147.700 129V176.500H140.500V129L136.500 132.500Z" fill="#fff" />
      </g>
    </svg>
  );
}

function Scrollbar() {
  return (
    <div className="flex w-[18px] shrink-0 flex-col items-center bg-[#efefef]">
      <span className="mt-[7px] border-x-4 border-b-4 border-x-transparent border-b-[#333]" />
      <div className="mt-[7px] ml-[2px] flex h-[427px] w-[14px] flex-col items-center justify-center gap-px rounded-[2px] border border-[#8e9296] bg-linear-to-r from-[#f4f4f4] via-[#dedfe1] to-[#bfc1c5]">
        <span className="h-[2px] w-[7px] bg-[#777]" />
        <span className="h-[2px] w-[7px] bg-[#777]" />
        <span className="h-[2px] w-[7px] bg-[#777]" />
      </div>
      <span className="mt-auto mb-[6px] border-x-4 border-t-4 border-x-transparent border-t-[#333]" />
    </div>
  );
}

function TaskButton({ tone, children }: { tone: string; children: ReactNode }) {
  return <div className={"flex h-[20px] w-[58.500px] shrink-0 justify-center rounded-t-[3px] border border-[#5f7690] " + tone}>{children}</div>;
}

function Taskbar() {
  const glass = "bg-linear-to-br from-[#eaf2fa] to-[#b6cde6]";
  return (
    <div className="flex h-[15px] overflow-hidden border-t-2 border-[#76889c] bg-linear-to-r from-[#879fba] from-3% via-[#aecdeb] via-6% to-[#aecdeb]">
      <svg className="ml-[10px] h-[32px] w-[32px] shrink-0" viewBox="0 0 32 32">
        <circle cx="16" cy="16.500" r="15.500" fill="#55809f" stroke="#2d5370" />
        <path d="M3 9Q16 -5 29 9Q16 6 3 9Z" fill="#a9cbdc" />
        <path d="M7 10Q11 6 15 8L13.500 16H6Z" fill="#f26b2e" />
        <path d="M17 8.500Q22 11 27 8L25 16H15.500Z" fill="#8fc93c" />
      </svg>
      <svg className="mt-[4px] ml-[29px] h-[22px] w-[32px] shrink-0" viewBox="0 0 32 22">
        <path d="M1 2H12L14 4H27V22H1Z" fill="#f6df94" stroke="#c9a442" />
        <path d="M4 7H17L18 9H31V22H4Z" fill="#fbeeb9" stroke="#c9a442" />
        <path d="M4 3H8M20 7H24" stroke="#3aa655" strokeWidth="2" />
        <path d="M13 4H16" stroke="#d43f2b" strokeWidth="2" />
        <path d="M20 7.500H24" stroke="#3c8fd9" strokeWidth="2" />
      </svg>
      <div className="ml-[15px] flex gap-[1.800px]">
        <TaskButton tone={glass}>
          <svg className="mt-[3px] h-[28px] w-[28px]" viewBox="0 0 28 28">
            <circle cx="14" cy="14" r="13.500" fill="#d9453b" />
            <path d="M1 10A14 14 0 0 0 5 24L10 14Z" fill="#3ba453" />
            <path d="M14 8H27A14 14 0 0 1 22 25Z" fill="#f3c233" />
            <circle cx="14" cy="14" r="6.500" fill="#fff" />
            <circle cx="14" cy="14" r="5" fill="#4a87e8" />
          </svg>
        </TaskButton>
        <TaskButton tone={glass}>
          <svg className="mt-[3px] h-[28px] w-[28px]" viewBox="0 0 28 28">
            <circle cx="14" cy="14" r="13" fill="#1c8fd0" />
            <path d="M0 24C-1 14 1 7 4 4L6 8L11 6L10 10L15 12L9 20Z" fill="#e9722a" />
            <path d="M22 3Q29 9 27 20L23 14Z" fill="#f2d13c" />
          </svg>
        </TaskButton>
        <div className="flex w-[58.500px] shrink-0 justify-center">
          <svg className="mt-[3px] h-[28px] w-[28px]" viewBox="0 0 28 28">
            <rect x="1" y="1" width="26" height="28" rx="8" fill="#7d5bea" stroke="#e9e4fb" />
            <path d="M9 6C6 8 8 14 12 18M14 5C19 5 22 8 22 13M14.500 8C17.500 8 19 10 19 12.500" fill="none" stroke="#fff" strokeWidth="2" />
          </svg>
        </div>
        <TaskButton tone={glass}>
          <svg className="mt-[2px] h-[28px] w-[28px]" viewBox="0 0 28 28">
            <circle cx="8" cy="8" r="7.500" fill="#12a5e8" />
            <circle cx="15" cy="15" r="12.500" fill="#12a5e8" />
            <path d="M19 11C17 8 11 8 11 12" fill="none" stroke="#fff" strokeWidth="3" />
          </svg>
        </TaskButton>
        <TaskButton tone={glass}>
          <div className="relative mt-[2px] h-[24px] w-[30px] rounded-tl-[6px] border-2 border-[#5a79b8] bg-[#b8cbea]">
            <span className="absolute top-[2px] left-[6px] h-[16px] w-[22px] bg-white text-center text-[8px] leading-[12px] font-black tracking-[-0.500px] text-[#2c4f9c]">ГАРТ</span>
          </div>
        </TaskButton>
        <TaskButton tone="bg-linear-to-r from-[#fbf6b5] to-[#f0d348]">
          <svg className="mt-[3px] h-[28px] w-[28px]" viewBox="0 0 28 28">
            <circle cx="14" cy="14" r="13.500" fill="#3a3d3f" />
            <path d="M11.500 4L16 9L14.500 11Z" fill="#2fd37b" stroke="#2fd37b" strokeWidth="1.500" />
          </svg>
        </TaskButton>
        <TaskButton tone={glass}>
          <svg className="mt-[2px] h-[28px] w-[32px]" viewBox="0 0 32 28">
            <ellipse cx="13" cy="15" rx="12.500" ry="9.500" fill="#d6ecf5" stroke="#58a5c9" />
            <circle cx="8" cy="11" r="2" fill="#f0a52e" />
            <circle cx="14" cy="9.500" r="2" fill="#64b949" />
            <path d="M16 17L25 5" stroke="#e39a3b" strokeWidth="3" />
            <path d="M22 4L26 0L30 5L25 8Z" fill="#b37b4d" />
          </svg>
        </TaskButton>
      </div>
      <div className="ml-auto flex h-[15px] w-[220px] shrink-0 bg-linear-to-r from-transparent to-[#869db6] to-20% text-[12px] text-white">
        <span className="mt-[7px] ml-[35px] text-[11px] leading-[14px] tracking-[-0.300px]">RU</span>
        <span className="mt-[12px] ml-[65px] h-[6px] w-[5px] rotate-45 bg-white/70" />
        <span className="mt-[4px] ml-auto leading-[14px] tracking-[-0.600px]">15:25</span>
        <span className="ml-[23px] h-[15px] w-[14px] border border-[#c1d0df] bg-[#8399b0]" />
      </div>
    </div>
  );
}

export default function App() {
  return (
    <div className="relative flex h-[1024px] w-[1638px] flex-col overflow-hidden bg-[#dbe8f7] font-['Noto_Sans',sans-serif]">
      <TitleBars />
      <Toolbar />
      <div className="flex h-[24px] items-center gap-[8px] border-b border-[#9fb3c9] bg-[#dbe8f7] pl-[8px] text-[11.500px] tracking-[-0.200px] text-black">
        <NNIcon />Вход
      </div>
      <div className="flex min-h-0 flex-1 border-l border-[#c9ccd0] bg-white">
        <div className="flex w-[1619.500px] shrink-0 flex-col overflow-hidden">
          <BannerAd />
          <Header />
          <Nav />
          <div className="flex min-h-0 flex-1 font-['Liberation_Sans',sans-serif]"><ProfileForm /></div>
        </div>
        <Scrollbar />
      </div>
      <Taskbar />
      <PurchasesPanel />
      <Annotation />
    </div>
  );
}
